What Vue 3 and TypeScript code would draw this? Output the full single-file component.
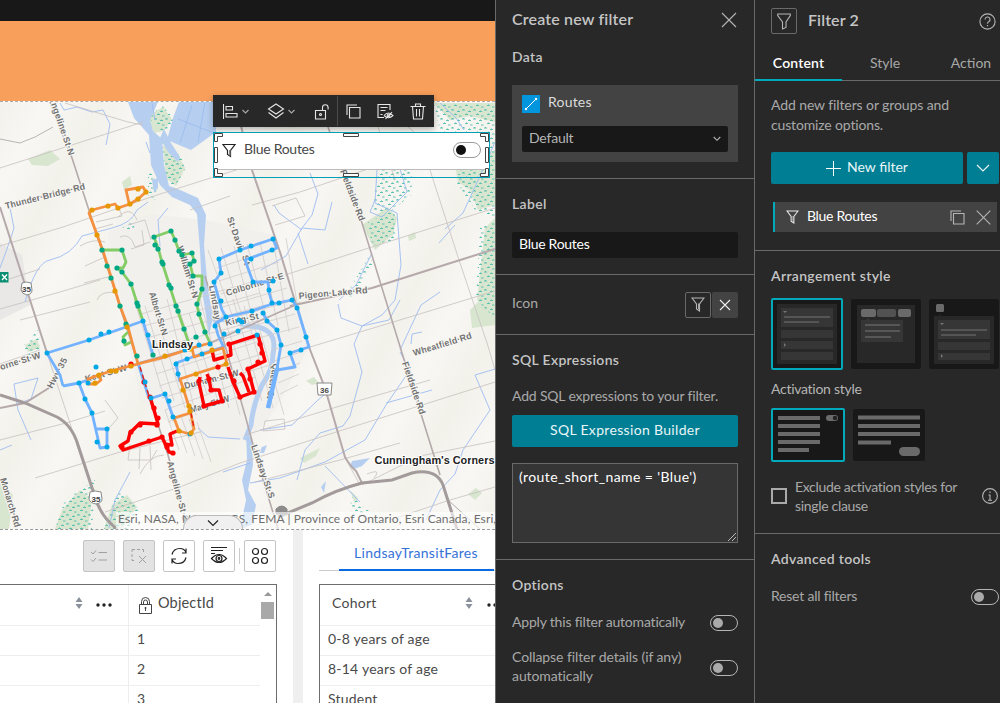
<script setup lang="ts">
interface MapLabel { t: string; x: number; y: number; r: number; w: number }
type Pt = [number, number]

const labels: MapLabel[] = [
  { t: 'ngeline·St·N', x: 51, y: 104, r: 71, w: 55 },
  { t: 'Thunder·Bridge·Rd', x: 6, y: 209, r: -14, w: 82 },
  { t: 'Albert·St·N', x: 149, y: 293, r: 73, w: 45 },
  { t: 'William·St·N', x: 177, y: 247, r: 73, w: 54 },
  { t: 'St·Davi', x: 227, y: 218, r: 71, w: 33 },
  { t: 'St', x: 242, y: 256, r: 75, w: 10 },
  { t: 'Lindsay', x: 209, y: 286, r: 80, w: 35 },
  { t: 'Colborne·St·E', x: 227, y: 296, r: -17, w: 60 },
  { t: 'Pigeon·Lake·Rd', x: 299, y: 299, r: -5, w: 69 },
  { t: 'Fieldside·Rd', x: 340, y: 171, r: 69, w: 54 },
  { t: 'Fieldside·Rd', x: 402, y: 363, r: 71, w: 55 },
  { t: 'Wheatfield·Rd', x: 414, y: 356, r: -17, w: 61 },
  { t: 'King·St', x: 226, y: 326, r: -12, w: 34 },
  { t: 'orne·St·W', x: 1, y: 370, r: -17, w: 42 },
  { t: 'Kent·St·W', x: 86, y: 382, r: -16, w: 43 },
  { t: 'Durham·St·W', x: 185, y: 389, r: -14, w: 56 },
  { t: 'Mary·St·W', x: 191, y: 413, r: -17, w: 41 },
  { t: 'Hwy·35', x: 52, y: 389, r: -62, w: 33 },
  { t: 'Angeline·St·S', x: 167, y: 462, r: 75, w: 62 },
  { t: 'Lindsay·St·S', x: 251, y: 446, r: 71, w: 56 },
  { t: 'Monarch·Rd', x: 0, y: 479, r: 73, w: 51 },
  { t: 'Queen·St', x: 273, y: 363, r: 100, w: 36 },
]

const minorRoads: string[] = [
  'M0 168 L78 143 L143 122', 'M0 246 L63 227 L160 194 L290 153', 'M0 309 L60 292 L100 280',
  'M65 103 L128 122 L143 125', 'M0 440 L66 423 L105 411', 'M35 478 L120 452 L200 432', 'M47 353 L83 463',
  'M40 350 L0 364', 'M105 512 L180 487 L240 463 L330 434 L438 400 L495 382',
  'M245 435 L340 406 L430 380', 'M285 275 L350 254 L422 231 L495 208', 'M252 205 L300 192 L365 170 L430 143',
  'M310 347 L390 323 L495 291', 'M362 485 L420 456 L495 441', 'M190 210 L230 196', 'M255 482 L340 460 L400 443',
  'M430 170 L459 260 L488 346 L495 370', 'M390 520 L450 500 L495 487', 'M380 103 L420 137',
  'M275 225 L305 216 L296 198 L272 206', 'M0 282 L40 269', 'M20 320 L90 302', 'M372 108 L395 180',
  'M105 400 L118 418 L109 428', 'M130 444 L128 460 L151 460 L157 450', 'M140 448 L139 469', 'M150 446 L151 470',
  'M140 474 Q150 455 164 455', 'M265 421 L284 419 L285 429 L263 431 Z', 'M367 474 Q382 468 374 478',
  'M360 485 L348 463', 'M118 217 Q131 205 137 220', 'M96 222 L122 216 L118 206', 'M95 229 L113 224',
  'M80 246 Q94 238 105 242', 'M85 266 L105 257', 'M84 283 L112 276', 'M97 300 Q101 290 117 293',
  'M120 237 Q130 232 135 247 L150 242', 'M128 225 L145 220 L151 240', 'M131 249 L144 245 L142 230',
]

// Town street grid, a family of parallel lines in each direction.
const blocks: string[] = []
for (let i = 0; i < 12; i++) {
  const x = 134 + i * 11
  blocks.push(`M${x} ${299 + (i % 3) * 7} L${x + 29} ${394 + (i % 4) * 7}`)
}
for (let i = 0; i < 10; i++) {
  const y = 314 + i * 12
  blocks.push(`M${141 + i * 3} ${y} L${255 + (i % 4) * 5} ${y - 33}`)
}
for (let i = 0; i < 7; i++) {
  blocks.push(`M${208 + i * 13} ${250 - i * 2} L${234 + i * 11} ${320 + (i % 3) * 6}`)
  blocks.push(`M${217 + i * 2} ${268 + i * 13} L${275 + i * 4} ${249 + i * 13}`)
}
for (let i = 0; i < 5; i++) {
  blocks.push(`M${272 + i * 2} ${350 + i * 11} l${30 - i * 3} -9`)
  blocks.push(`M${165 + i * 8} ${410 + i * 3} l14 40`)
}

const streams: string[] = [
  'M60 103 L64 110 L77 107 L92 112 L103 110 L110 124 L106 145', 'M0 268 Q9 244 14 228 L10 208',
  'M25 302 Q36 262 50 260 Q72 255 82 236 L112 228 Q132 223 137 210 L148 202', 'M168 208 L158 220 L160 246',
  'M152 103 L155 120', 'M150 153 L146 142', 'M14 405 L31 399 L38 378', 'M38 378 L14 384 L18 410 L31 440',
  'M0 450 L12 445', 'M310 173 L318 194 L312 215 L302 228 L325 230 L332 202', 'M302 228 L286 256 L261 270',
  'M298 233 L308 264', 'M377 169 L375 203 L397 213 L401 265 L395 300 L382 315 L362 326 L354 344 L362 372 L350 416 L343 426 L320 433 L305 450 L297 480',
  'M400 300 L389 320 L362 326', 'M375 200 L370 212 L382 217 L407 192 L400 169', 'M372 253 L356 285 L339 300',
  'M440 292 L421 305 L400 350', 'M400 352 L410 370 L386 405 L365 440 L325 462 L280 478 L250 483',
  'M386 403 L432 390', 'M495 369 L475 375 L490 410 L463 450 L455 474 L440 490 L426 520', 'M325 466 L360 502',
  'M338 304 L341 318 L362 326', 'M455 225 L439 243', 'M495 142 L485 165 L463 213 L445 229',
  'M440 103 L456 118 L464 130', 'M302 230 L279 213 L274 205', 'M260 430 L292 425 L318 400 L330 390',
  'M411 344 L412 334 L422 332', 'M130 472 L115 500 L109 528',
  'M198 428 L208 437 L240 439', 'M223 472 L250 463',
]

const greenRoutes: Pt[][] = [
  [[102, 250], [122, 250], [126, 262], [123, 268], [117, 268], [122, 272], [131, 284], [137, 303], [143, 321]],
  [[189, 344], [184, 329], [176, 306], [170, 287], [162, 262], [158, 248], [154, 237], [171, 231], [175, 240], [179, 251], [182, 255], [192, 253], [194, 261], [190, 264], [193, 276], [202, 276], [202, 289], [197, 305], [199, 314], [205, 332], [210, 343]],
  [[128, 332], [123, 337], [125, 345], [131, 342]],
]
const blueRoutes: Pt[][] = [
  [[63, 386], [60, 375], [47, 353], [89, 340], [143, 321], [153, 355]],
  [[63, 386], [79, 383], [88, 380]],
  [[79, 383], [85, 399], [92, 413], [100, 448], [107, 447], [107, 429], [96, 429]],
  [[138, 363], [148, 395], [152, 398], [165, 394], [173, 417]],
  [[180, 382], [178, 374], [176, 363], [201, 354], [223, 347]],
  [[272, 303], [269, 292], [268, 282], [253, 282], [245, 260], [272, 250], [277, 248], [273, 239], [240, 250], [219, 259], [221, 273], [214, 282], [222, 310], [226, 317]],
  [[224, 348], [218, 335], [215, 324], [226, 317], [252, 311], [272, 304], [292, 300], [297, 307], [306, 337], [309, 347], [290, 353], [295, 367], [277, 370]],
  [[263, 313], [267, 321], [277, 330], [281, 345], [277, 369], [268, 408]],
]
const redRoutes: Pt[][] = [
  [[150, 397], [154, 410], [158, 424], [140, 423], [130, 433], [128, 441], [120, 446], [123, 450], [147, 442], [162, 437], [169, 452], [173, 453]],
  [[164, 444], [172, 445], [170, 434], [177, 431]],
  [[200, 377], [199, 383], [204, 406], [222, 401], [219, 390], [211, 390], [209, 379], [207, 374]],
  [[228, 367], [233, 382], [240, 397], [254, 392], [248, 369], [265, 361], [258, 335], [230, 344], [231, 355], [214, 360], [212, 350]],
  [[249, 392], [243, 376], [240, 373]],
]
const orangeRoutes: Pt[][] = [
  [[138, 364], [128, 327], [120, 306], [103, 251], [89, 213], [92, 210], [115, 204], [118, 208], [130, 204], [138, 199], [146, 192], [143, 187], [126, 190], [129, 203]],
  [[210, 343], [192, 348], [165, 357], [138, 364], [111, 371], [99, 375], [88, 379], [88, 384], [96, 384], [101, 380], [99, 376]],
  [[192, 348], [194, 357], [223, 348], [227, 364], [204, 371], [180, 379], [184, 391], [190, 410], [194, 429], [190, 434], [179, 431], [174, 418], [190, 413]],
]
const path = (p: Pt[]): string => 'M' + p.map((q) => q.join(' ')).join(' L')

const greenStops: Pt[] = [[102, 250], [122, 250], [107, 266], [117, 268], [122, 272], [111, 278], [131, 284], [137, 303], [138, 306], [120, 306], [154, 237], [171, 231], [155, 245], [158, 249], [175, 240], [179, 251], [182, 255], [192, 253], [194, 261], [190, 264], [193, 276], [202, 289], [162, 262], [163, 264], [169, 285], [171, 288], [176, 306], [178, 311], [197, 304], [199, 314], [184, 329], [189, 344], [196, 337], [205, 332], [126, 324], [124, 341], [137, 356], [153, 355]]
const blueStops: Pt[] = [[47, 353], [89, 340], [101, 334], [109, 332], [143, 321], [148, 335], [96, 367], [79, 383], [85, 399], [92, 413], [97, 442], [107, 447], [107, 429], [145, 382], [151, 398], [165, 394], [169, 401], [173, 417], [176, 364], [187, 359], [202, 354], [178, 374], [185, 350], [199, 345], [210, 344], [224, 334], [238, 331], [242, 322], [239, 320], [219, 259], [240, 250], [221, 273], [214, 282], [221, 301], [273, 239], [251, 246], [272, 250], [251, 259], [253, 282], [273, 281], [269, 290], [272, 303], [279, 303], [292, 300], [297, 308], [252, 311], [263, 313], [267, 321], [277, 330], [281, 345], [306, 337], [301, 350], [290, 353], [257, 335], [226, 317], [215, 326], [190, 434], [88, 383]]
const orangeStops: Pt[] = [[92, 210], [108, 206], [118, 208], [130, 204], [138, 199], [146, 192], [138, 189], [97, 235], [115, 291], [127, 327], [131, 366], [116, 371], [111, 371], [99, 375], [95, 383], [165, 356], [212, 350], [226, 364], [196, 374], [183, 390], [189, 406], [190, 411], [179, 431], [191, 433], [190, 349]]
const redStops: Pt[] = [[131, 364], [144, 382], [150, 397], [154, 408], [158, 418], [157, 425], [140, 425], [131, 432], [122, 447], [149, 441], [162, 437], [167, 447], [173, 453], [234, 381], [240, 397], [218, 367], [229, 344], [254, 392], [250, 379], [248, 369], [258, 362], [262, 353], [260, 344], [211, 390], [209, 379], [199, 381], [204, 406], [222, 401]]

const ids: string[] = ['1', '2', '3']
const cohorts: string[] = ['0-8 years of age', '8-14 years of age', 'Student']
</script>

<template>
  <div class="app">
    <main class="canvas">
      <div class="top-bar"></div>
      <div class="banner"></div>

      <section class="map">
        <svg class="map-art" viewBox="0 102 495 427" width="495" height="427">
          <defs>
            <pattern id="marsh" width="11" height="9" patternUnits="userSpaceOnUse">
              <path d="M0 2h3M1.500 1v1M6 3.500h3M7.500 2.500v1M3 6.500h3M4.500 5.500v1M8 8h2.500" stroke="#52bdae" stroke-width=".9" />
            </pattern>
            <linearGradient id="relief" x1="0" y1="0" x2="40" y2="22" gradientUnits="userSpaceOnUse" spreadMethod="reflect">
              <stop offset="0" stop-color="#f8f7f4" /><stop offset="1" stop-color="#f2f1ea" />
            </linearGradient>
          </defs>
          <rect y="102" width="495" height="427" fill="url(#relief)" />
          <path d="M0 243 L22 255 L30 305 L0 320Z" fill="#e9e8e6" />
          <path d="M108 232 L150 214 L205 220 L275 235 L310 345 L275 410 L250 440 L190 440 L140 400Z" fill="#f1f0ed" />
          <g fill="#d8e5cf">
            <path d="M28 159 l22 -9 10 9 -12 7 -16 -1Z" /><path d="M122 182 l8 -6 2 9 -8 5Z" />
            <path d="M147 116 l16 -9 9 12 -8 12 -10 2Z" /><path d="M163 145 L178 155 L185 168 L176 186 L166 178Z" />
            <path d="M62 510 L80 490 L92 500 L88 529 L55 529Z" /><path d="M112 505 l15 -10 10 12 -15 22 -18 0Z" />
            <path d="M434 103 L495 103 V122 L470 116 L450 120Z" /><path d="M455 165 L495 150 V205 L478 210 L470 190 L458 182Z" />
            <path d="M362 225 L388 207 L397 218 L393 235 L375 250Z" /><path d="M485 228 l10 -10 V320 L477 300Z" />
            <path d="M470 310 L480 300 L495 305 V325 L472 328Z" /><path d="M408 236 l7 -4 1 6 -7 3Z" />
            <path d="M468 494 l8 -6 6 5 -7 7Z" /><path d="M306 381 l8 -4 5 6 -7 2Z" />
            <path d="M0 480 l13 15 -4 34 H0Z" /><path d="M25 345 l12 -6 3 9 -12 4Z" />
            <path d="M300 458 l20 -10 -4 8 -12 7Z" /><path d="M350 490 l8 8 -3 6Z" />
          </g>
          <g fill="url(#marsh)">
            <path d="M147 116 L163 106 L174 119 L164 133Z" /><path d="M161 140 L180 152 L185 170 L174 188 L164 175Z" />
            <path d="M55 529 L65 500 L95 480 L92 529Z" /><path d="M104 529 L118 490 L140 510 L128 529Z" />
            <path d="M434 103 L495 103 V218 L475 210 L455 180 L470 155 L440 132Z" />
            <path d="M378 170 L413 168 L411 195 L390 212 L372 212Z" />
            <path d="M368 222 L395 210 L395 240 L372 245Z" /><path d="M480 228 L495 220 V318 L476 300Z" />
            <path d="M24 345 L38 330 L40 355 L26 357Z" /><path d="M346 295 L368 258 L374 262 L352 297Z" />
            <path d="M122 228 L133 218 L135 232Z" /><path d="M148 170 L158 180 L155 200 L148 195Z" />
            <path d="M350 495 L370 512 L352 518Z" />
          </g>
          <g fill="#b6cff0">
            <path d="M128 102 H158 L150 120 L153 131 L162 139 L164 165 L169 186 L180 190 L198 198 L206 215 L204 245 L208 290 L213 318 L209 335 L202 290 L200 250 L197 214 L190 205 L172 197 L160 185 L151 165 L149 135 L134 118Z" />
            <path d="M164 129 L171 143 L180 157 L178 162 L168 152 L160 138Z" />
            <path d="M179 102 H216 V132 L191 150 L167 140 L173 118Z" />
            <path d="M152 180 l6 -2 0 10 -4 5Z" />
            <path d="M246 431 L252 440 L253 465 L248 490 L256 505 L252 525 L240 529 L246 500 L242 480 L247 460Z" />
            <path d="M352 461 l18 -3 -8 8 -8 3 -4 -3Z" /><path d="M262 447 l5 -2 -3 8 -5 0Z" /><path d="M321 487 l5 -6 -2 12Z" />
          </g>
          <path d="M213 320 Q230 318 247 326 Q279 326 273 354 Q273 370 262 385 Q253 405 251 425 L245 440" fill="none" stroke="#b6cff0" stroke-width="5" />
          <g fill="none" stroke="#9dbcf2" stroke-width=".9"><path v-for="(d, i) in streams" :key="i" :d="d" /></g>
          <path d="M178 119 l36 14 M192 105 l-12 38 M205 102 l-7 40" stroke="#94b8ed" stroke-width=".7" />
          <g fill="none" stroke="#c8c0c0" stroke-width=".8"><path v-for="(d, i) in minorRoads" :key="i" :d="d" /></g>
          <g fill="none" stroke="#d0c9c9" stroke-width=".75"><path v-for="(d, i) in blocks" :key="i" :d="d" /></g>
          <path d="M0 139 L20 143 L35 137 L53 127" fill="none" stroke="#999" stroke-width=".7" />
          <g fill="none" stroke="#b5a9ab" stroke-width="2">
            <path d="M50 102 L72 158 L97 235 L138 363 L168 455 L188 529" stroke-width="1.600" />
            <path d="M0 207 L30 300 L47 353" /><path d="M0 408 L25 403 L52 386" />
            <path d="M235 102 L252 170 L280 252 L309 347 L325 388 L345 457 Q350 466 356 471 L362 483" />
            <path d="M328 127 L362 223 L402 353 L440 475" stroke-width="1.600" />
            <path d="M290 306 L372 288 L438 267 L495 249" />
            <path d="M205 276 L245 415 L258 463 L278 529" stroke-width="1.600" />
            <path d="M138 363 L210 343 L300 303" stroke-width="1.600" />
            <path d="M448 500 L480 529" stroke-width="1" />
          </g>
          <g fill="none" stroke="#a39a9b" stroke-width="3">
            <path d="M0 395 L25 403 L57 417 Q72 425 78 445 L95 497 Q101 517 117 529" />
            <path d="M278 517 L312 503 Q335 490 362 483 L392 480 L412 473 Q436 468 443 485 L457 529" />
          </g>

          <g class="road-names">
            <text v-for="(l, i) in labels" :key="i" :transform="`translate(${l.x} ${l.y}) rotate(${l.r})`" :textLength="l.w">{{ l.t }}</text>
          </g>

          <g fill="none" stroke-linejoin="round">
            <path v-for="(r, i) in greenRoutes" :key="'g' + i" :d="path(r)" stroke="#84cc66" stroke-width="2.800" />
            <path v-for="(r, i) in blueRoutes" :key="'b' + i" :d="path(r)" stroke="#73b2ff" stroke-width="2.800" />
            <path v-for="(r, i) in redRoutes" :key="'r' + i" :d="path(r)" stroke="#ff0000" stroke-width="3.400" />
            <path v-for="(r, i) in orangeRoutes" :key="'o' + i" :d="path(r)" stroke="#f4903f" stroke-width="2.800" />
            <path d="M140 367 L149 396 M191 413 L194 428" stroke="#e2231a" stroke-width="1.500" stroke-dasharray="5 3" />
            <path d="M277 369 L268 408" stroke="#73b2ff" stroke-width="4.500" />
          </g>
          <g fill="#ff0000"><circle v-for="(p, i) in redStops" :key="i" :cx="p[0]" :cy="p[1]" r="2.600" /></g>
          <g fill="#00a7e6"><circle v-for="(p, i) in blueStops" :key="i" :cx="p[0]" :cy="p[1]" r="2.500" /></g>
          <g fill="#00a984"><circle v-for="(p, i) in greenStops" :key="i" :cx="p[0]" :cy="p[1]" r="2.600" /></g>
          <g fill="#e69800"><circle v-for="(p, i) in orangeStops" :key="i" :cx="p[0]" :cy="p[1]" r="2.600" /></g>

          <text class="place" x="152" y="347.500" textLength="41">Lindsay</text>
          <text class="place" x="374.500" y="463.500" textLength="120">Cunningham's Corners</text>
          <g class="shield">
            <path d="M22 283 q4 -2 9 0 l1 7 q0 4 -5 5 q-5 -1 -6 -5Z M90 492 q5 -2 11 0 l1 7 q0 4 -6 5 q-6 -1 -7 -5Z" />
            <text x="26.500" y="292">35</text><text x="96" y="501.500">35</text>
            <path d="M317 383 h15 l-1 12 h-13Z" /><text x="324.500" y="392.500">36</text>
            <path d="M276 509 q6 -6 11 0 v5 h-11Z" class="shield-cap" />
          </g>
          <rect y="272" width="8.500" height="10.500" fill="#0a8f72" />
          <path d="M2 274.500l5 5.500M7 274.500l-5 5.500" stroke="#fff" stroke-width="1.400" />
        </svg>
        <div class="attribution">Esri, NASA, NGA, USGS, FEMA | Province of Ontario, Esri Canada, Esri,</div>
        <div class="expander">
          <svg width="12" height="8" viewBox="0 0 12 8"><path d="M1 1.500l5 5 5-5" fill="none" stroke="#222" stroke-width="1.200" /></svg>
        </div>
      </section>

      <section class="tables">
        <div class="table-card first">
          <div class="tools">
            <span class="tool off"><svg viewBox="0 0 18 18"><path d="M1 5l2 2 3-3.500M8.500 5.500H17M1 12.500l2 2 3-3.500M8.500 13H17" /></svg></span>
            <span class="tool off"><svg viewBox="0 0 18 18"><path d="M2 5V2.500h3M7 2.500h3M12 2.500h1.500V5M2 7v3M2 12v1.500h2M9 9l7 7M16 9l-7 7" /></svg></span>
            <span class="tool"><svg viewBox="0 0 18 18"><path d="M2 7.500C3 3.500 6.500 1.500 10 1.500c3 0 5 1.500 6 4M16 1.500v4.500h-4M16 10.500c-1 4-4.500 6-8 6-3 0-5-1.500-6-4M2 16.500V12h4" /></svg></span>
            <span class="tool"><svg viewBox="0 0 18 18"><path d="M1 .5h16M1 3.500h12M1 6.500h4M1.500 11.500Q9 3.500 16.500 11.500Q9 19.500 1.500 11.500Z" /><circle cx="9" cy="11.500" r="3" /><circle cx="9" cy="11.500" r=".8" /></svg></span>
            <i class="tool-sep"></i>
            <span class="tool"><svg viewBox="0 0 18 18"><circle cx="4.500" cy="4.500" r="3" /><circle cx="13.500" cy="4.500" r="3" /><circle cx="4.500" cy="13.500" r="3" /><circle cx="13.500" cy="13.500" r="3" /></svg></span>
          </div>
          <div class="grid left-grid">
            <div class="grid-head">
              <svg class="sort" width="8" height="12" viewBox="0 0 8 12"><path d="M4 0l3.500 5h-7zM4 12l3.500-5h-7z" /></svg>
              <svg class="dots" width="16" height="4" viewBox="0 0 16 4"><circle cx="2" cy="2" r="1.700" /><circle cx="8" cy="2" r="1.700" /><circle cx="14" cy="2" r="1.700" /></svg>
              <svg class="lock" width="13" height="17" viewBox="0 0 13 17"><path d="M.5 7.500h12v9H.5zM2.500 7.500V4.500a4 4 0 0 1 8 0v3M4.500 7.500V5a2 2 0 0 1 4 0v2.500M6.500 10v4M5.500 11h2" /></svg>
              <span class="object-id">ObjectId</span>
            </div>
            <div v-for="id in ids" :key="id" class="grid-row"><span>{{ id }}</span></div>
            <div class="scroller"><i></i><b></b></div>
          </div>
        </div>
        <div class="table-gap"></div>
        <div class="table-card second">
          <div class="tab-strip"><span class="table-tab">LindsayTransitFares</span></div>
          <div class="grid right-grid">
            <div class="grid-head">
              <span class="cohort">Cohort</span>
              <svg class="sort" width="8" height="12" viewBox="0 0 8 12"><path d="M4 0l3.500 5h-7zM4 12l3.500-5h-7z" /></svg>
              <svg class="dots" width="16" height="4" viewBox="0 0 16 4"><circle cx="2" cy="2" r="1.700" /><circle cx="8" cy="2" r="1.700" /><circle cx="14" cy="2" r="1.700" /></svg>
            </div>
            <div v-for="c in cohorts" :key="c" class="grid-row"><span>{{ c }}</span></div>
          </div>
        </div>
      </section>

      <div class="widget-bar">
        <svg class="g-align" width="15" height="15" viewBox="0 0 15 15"><path d="M.5 0v15M3 2.500h6.500v3.500H3zM3 9.500h11V13H3z" /></svg>
        <svg class="chev c1" width="7" height="5" viewBox="0 0 7 5"><path d="M.5 1l3 3 3-3" /></svg>
        <svg class="g-layers" width="18" height="17" viewBox="0 0 18 17"><path d="M9 1l7.500 5L9 11 1.500 6zM1.500 9.500L9 15l7.500-5.500" /></svg>
        <svg class="chev c2" width="7" height="5" viewBox="0 0 7 5"><path d="M.5 1l3 3 3-3" /></svg>
        <svg class="g-lock" width="15" height="17" viewBox="0 0 15 17"><path d="M1.500 7.500h10v8.500h-10zM8.500 7.500V4.500a2.800 2.800 0 0 1 5.600 0v2" /><circle cx="6.500" cy="11.500" r="1" /></svg>
        <i class="bar-sep"></i>
        <svg class="g-copy" width="15" height="15" viewBox="0 0 15 15"><path d="M3.500 3.500h10.500V14H3.500zM1 11V1h10" /></svg>
        <svg class="g-pend" width="17" height="17" viewBox="0 0 17 17"><path d="M13 7V1.500H1V14.500h6M3.500 4.500h7M3.500 7.500h5M3.500 11.500h2M7 12.500Q11.500 7.500 16 12.500Q11.500 17 7 12.500M8.500 16l6.500-7" /><circle cx="11.500" cy="12.300" r="1.300" /></svg>
        <svg class="g-trash" width="16" height="17" viewBox="0 0 16 17"><path d="M.5 3.500h15M5.500 3V1h5v2M2.500 3.500L3.500 16h9l1-12.500M6.500 6v7.500M9.500 6v7.500" /></svg>
      </div>

      <div class="widget">
        <div class="widget-row">
          <svg width="15" height="15" viewBox="0 0 15 15"><path d="M1 1.500h12L8.500 7.500V13.500L5.500 11.500V7.500z" fill="none" stroke="#222" stroke-width="1.200" /><path d="M7 7h1.500v6L7 12z" fill="#888" /></svg>
          <span>Blue Routes</span>
          <div class="switch light"><i></i></div>
        </div>
        <svg class="handles" width="277" height="46" viewBox="0 0 277 46">
          <g fill="#fff" stroke="#444" stroke-width="1">
            <path d="M1.500 1.500h8v3h-5v5h-3zM275.500 1.500h-8v3h5v5h3zM1.500 44.500h8v-3h-5v-5h-3zM275.500 44.500h-8v-3h5v-5h3z" />
            <path d="M130.500 1.500h15v3h-15zM130.500 41.500h15v3h-15zM1.500 15.500h3v15h-3zM272.500 15.500h3v15h-3z" />
          </g>
        </svg>
      </div>
    </main>

    <aside class="panel filter-panel">
      <section class="block data-block">
        <header class="row"><h2 class="t-create">Create new filter</h2>
          <svg class="close" width="16" height="16" viewBox="0 0 16 16"><path d="M1 1l14 14M15 1L1 15" class="ln" /></svg></header>
        <h3 class="t-data">Data</h3>
        <div class="source">
          <div class="source-name"><span class="source-icon"><svg width="18" height="18" viewBox="0 0 18 18"><path d="M4 14L14 4" stroke="#fff" /><circle cx="4" cy="14" r="1.200" fill="#fff" /><circle cx="14" cy="4" r="1.200" fill="#fff" /></svg></span><span class="t-routes">Routes</span></div>
          <div class="select"><span>Default</span><svg width="8" height="6" viewBox="0 0 8 6"><path d="M.7 1l3.300 3.300L7.300 1" class="ln" /></svg></div>
        </div>
      </section>
      <section class="block label-block"><h3 class="t-label">Label</h3><div class="input">Blue Routes</div></section>
      <section class="block icon-block"><span class="t-icon">Icon</span>
        <div class="icon-pair">
          <span class="icon-box"><svg width="14" height="15" viewBox="0 0 14 15"><path d="M1 1h12L8.500 7v7l-3-2V7z" class="ln" /><path d="M7 6.500h1.500V13L7 12z" fill="#aaa" /></svg></span>
          <span class="icon-clear"><svg width="12" height="12" viewBox="0 0 12 12"><path d="M1 1l10 10M11 1L1 11" class="ln bright" /></svg></span>
        </div>
      </section>
      <section class="block sql-block">
        <h3 class="t-sql">SQL Expressions</h3>
        <p class="t-add">Add SQL expressions to your filter.</p>
        <div class="primary builder">SQL Expression Builder</div>
        <div class="sql-text">(route_short_name = 'Blue')<svg width="8" height="8" viewBox="0 0 8 8"><path d="M0 8L8 0M4 8l4-4" stroke="#ddd" stroke-width=".8" /></svg></div>
      </section>
      <section class="block options-block">
        <h3 class="t-options">Options</h3>
        <div class="row opt"><span class="t-apply">Apply this filter automatically</span><div class="switch"><i></i></div></div>
        <div class="row opt two"><span class="t-collapse">Collapse filter details (if any)<br />automatically</span><div class="switch"><i></i></div></div>
      </section>
    </aside>

    <aside class="panel config-panel">
      <header class="config-head">
        <span class="icon-box"><svg width="14" height="17" viewBox="0 0 14 17"><path d="M.7 1h12.600v1.500L9 9v5.500L5.500 16V9L.7 2.500z" class="ln" /></svg></span>
        <h2 class="t-filter2">Filter 2</h2>
        <svg class="help" width="17" height="17" viewBox="0 0 17 17"><circle cx="8.500" cy="8.500" r="7.600" class="ln" /><path d="M6 6.500a2.500 2.500 0 1 1 3.700 2.200Q8.500 9.300 8.500 10.700M8.500 12v1.300" class="ln" /></svg>
      </header>
      <nav class="tabs"><span class="tab on">Content</span><span class="tab">Style</span><span class="tab action">Action</span></nav>
      <section class="block intro">
        <p class="t-intro">Add new filters or groups and<br /><em>customize options.</em></p>
        <div class="new-row">
          <div class="primary new"><svg width="15" height="15" viewBox="0 0 15 15"><path d="M7.500 0v15M0 7.500h15" stroke="#fff" /></svg><span>New filter</span></div>
          <div class="primary more"><svg width="14" height="8" viewBox="0 0 14 8"><path d="M1 1l6 6 6-6" stroke="#e8f5f7" fill="none" stroke-width="1.200" /></svg></div>
        </div>
        <div class="filter-item">
          <svg width="13" height="14" viewBox="0 0 14 15"><path d="M1 1h12L8.500 7v7l-3-2V7z" class="ln bright" /><path d="M7 6.500h1.500V13L7 12z" fill="#bbb" /></svg>
          <span>Blue Routes</span>
          <svg class="dup" width="15" height="15" viewBox="0 0 15 15"><path d="M3.500 3.500h10.500V14H3.500zM1 11V1h10" class="ln" /></svg>
          <svg width="15" height="15" viewBox="0 0 15 15"><path d="M.7 .7l13.600 13.600M14.300 .7L.7 14.300" class="ln" /></svg>
        </div>
      </section>
      <section class="block styles">
        <h3 class="t-arr">Arrangement style</h3>
        <div class="cards">
          <div class="card selected"><svg width="68" height="68" viewBox="0 0 68 68"><path d="M4 4h60v60H4z" fill="#282828" /><path d="M8 8h52v19H8zM8 30h52v8H8zM8 41h52v8H8zM8 52h52v8H8z" fill="#363636" /><path d="M11 17h46M11 22h35" stroke="#555" stroke-width="2" /><path d="M10 11h4l-2 2zM11 43v4l2-2z" fill="#777" /></svg></div>
          <div class="card"><svg width="70" height="70" viewBox="0 0 70 70"><path d="M6 6h58v58H6z" fill="#282828" /><path d="M10 21h5l2-2 2 2h33v22H10z" fill="#363636" /><rect x="10" y="10" width="15" height="8" rx="2" fill="#6a6a6a" /><rect x="26" y="10" width="19" height="8" rx="2" fill="#525252" /><rect x="47" y="10" width="13" height="8" rx="2" fill="#6a6a6a" /><path d="M14 26h35M14 32h35M14 38h26" stroke="#575757" stroke-width="2" /></svg></div>
          <div class="card"><svg width="70" height="70" viewBox="0 0 70 70"><rect x="7" y="5" width="8" height="8" rx="1.500" fill="#6a6a6a" /><path d="M5 17h5l1-2 1 2h53v48H5z" fill="#282828" /><path d="M9 21h52v19H9zM9 43h52v8H9zM9 54h52v7H9z" fill="#363636" /><path d="M12 31h46M12 36h35" stroke="#555" stroke-width="2" /><path d="M11 24h4l-2 2zM12 55v4l2-2z" fill="#777" /></svg></div>
        </div>
        <h4 class="t-act">Activation style</h4>
        <div class="cards low">
          <div class="card selected"><svg width="70" height="50" viewBox="0 0 70 50"><path d="M5 8h42M5 16h42M5 24h42M5 32h42M5 40h31" stroke="#6a6a6a" stroke-width="4" /><rect x="53" y="5" width="12" height="6" rx="3" fill="#6a6a6a" /><circle cx="62" cy="8" r="2.200" fill="#222" /></svg></div>
          <div class="card"><svg width="72" height="52" viewBox="0 0 72 52"><path d="M5 8.500h62M5 17h62M5 25h62M5 33.500h33" stroke="#6a6a6a" stroke-width="4" /><rect x="46" y="38" width="21" height="9" rx="4.500" fill="#6a6a6a" /></svg></div>
        </div>
        <div class="exclude">
          <i class="check"></i><span class="t-excl">Exclude activation styles for<br />single clause</span>
          <svg width="16" height="16" viewBox="0 0 16 16"><circle cx="8" cy="8" r="7.400" class="ln" /><path d="M8 3.500v1.600M6.500 7H8v5M6 12.200h4" class="ln" /></svg>
        </div>
      </section>
      <section class="advanced">
        <h3 class="t-adv">Advanced tools</h3>
        <div class="row reset"><span class="t-reset">Reset all filters</span><div class="switch"><i></i></div></div>
      </section>
    </aside>
  </div>
</template>

<style>
body { margin: 0; overflow: hidden; }
</style>

<style scoped>
* { box-sizing: border-box; }
h2, h3, h4, p { margin: 0; }
svg { display: block; flex: none; }
span, h2, h3, h4, p { white-space: nowrap; }
.app { display: flex; width: 1000px; height: 703px; overflow: hidden; background: #282828; font: 14px/19px Lato, "Open Sans", sans-serif; }
.canvas { position: relative; width: 495px; height: 703px; display: flex; flex-direction: column; background: #fff; overflow: hidden; }
.top-bar { flex: none; height: 21px; background: #181818; }
.banner { flex: none; height: 80px; background: #f89f5b; }
.map { position: relative; flex: none; height: 429px; border-top: 1px dashed #aaa; border-bottom: 1px dashed #999; overflow: hidden; }
.road-names text { font: bold 9px "Liberation Sans", Arial, sans-serif; fill: #727272; stroke: #f7f6f2; stroke-width: 2px; paint-order: stroke; }
.place { font: bold 11px "Liberation Sans", Arial, sans-serif; fill: #222; stroke: #fff; stroke-width: 2px; paint-order: stroke; }
.shield path { fill: #fff; stroke: #888; }
.shield .shield-cap { fill: #8c8c8c; }
.shield text { font: bold 8px "Liberation Sans", Arial, sans-serif; fill: #444; text-anchor: middle; }
.attribution { position: absolute; left: 116px; right: 0; bottom: 0; height: 17px; padding-left: 2px; overflow: hidden; white-space: nowrap; background: rgba(255,255,255,.62); color: #6e6e6e; font-size: 12px; line-height: 14px; letter-spacing: .11px; }
.expander { position: absolute; left: 183px; bottom: 0; width: 60px; height: 14px; display: flex; align-items: center; justify-content: center; border: 1px solid #bbb; border-bottom: 0; border-radius: 22px 22px 0 0; background: #f0f0f0; }

.tables { flex: 1; min-height: 0; overflow: hidden; display: flex; color: #4a4a4a; }
.first { width: 293px; }
.table-gap { width: 10px; background: #efefef; }
.second { width: 192px; padding-left: 16px; }
.tools { display: flex; align-items: center; height: 54px; padding: 0 0 3px 83px; gap: 8px; }
.tool { width: 32px; height: 32px; display: grid; place-items: center; border: 1px solid #c4c4c4; border-radius: 2px; }
.tool svg { width: 18px; height: 18px; fill: none; stroke: #222; stroke-width: 1.200; }
.off { background: #e3e3e3; }
.off svg { stroke: #a0a0a0; stroke-width: 1; }
.tool-sep { width: 1px; height: 16px; margin: 0 -4px; background: #ccc; }
.grid { position: relative; height: 160px; border: 1px solid #6d6d6d; border-bottom: 0; }
.left-grid { width: 277px; border-left: 0; }
.right-grid { width: 200px; }
.grid-head { display: flex; align-items: center; height: 41px; border-bottom: 1px solid #eee; padding-bottom: 4px; }
.sort { fill: #8a919c; }
.left-grid .sort { margin-left: 75px; }
.dots { margin: 3px 0 0 13px; fill: #222; }
.lock { margin: 4px 0 0 27px; fill: none; stroke: #444; }
.object-id { margin-left: 6px; padding-bottom: 1px; font-size: 14.500px; letter-spacing: .15px; }
.left-grid .grid-row { height: 30px; width: 260px; padding-left: 137px; border-bottom: 1px solid #eee; line-height: 25px; }
.left-grid::before { content: ""; position: absolute; left: 128px; top: 0; width: 1px; height: 160px; background: #eee; }
.left-grid .grid-head { width: 260px; }
.scroller { position: absolute; right: 0; top: 0; width: 17px; height: 140px; display: flex; flex-direction: column; align-items: center; }
.scroller i { margin-top: 7px; border: 4px solid transparent; border-top: 0; border-bottom: 4px solid #999; }
.scroller b { margin-top: 6px; width: 13px; height: 17px; background: #a9a9a9; }
.cohort { width: 145px; flex: none; padding: 0 0 2px 12px; letter-spacing: .25px; }
.right-grid .grid-row { height: 30px; padding-left: 8px; border-bottom: 1px solid #eee; line-height: 25px; letter-spacing: .22px; }
.right-grid .dots { margin-left: 14px; }
.tab-strip { height: 41px; border-bottom: 1px solid #ccc; margin-bottom: 13px; padding-left: 20px; }
.table-tab { display: block; width: 155px; height: 41px; padding: 13px 0 0 15px; border-bottom: 2px solid #0b6ae0; color: #3572d8; letter-spacing: .3px; }

.widget-bar { position: absolute; left: 213px; top: 95px; width: 221px; height: 32px; display: flex; align-items: center; padding-left: 10px; background: #282828; box-shadow: 0 2px 6px rgba(0,0,0,.3); }
.widget-bar svg { fill: none; stroke: #e6e6e6; stroke-width: 1.100; }
.widget-bar .chev { stroke: #aaa; }
.c1 { margin-left: 4px; } .g-layers { margin-left: 18px; } .c2 { margin-left: 3px; } .g-lock { margin-left: 19px; }
.bar-sep { width: 1px; height: 30px; margin-left: 8px; background: #4a4a4a; } .g-copy { margin-left: 8px; } .g-pend { margin-left: 16px; } .g-trash { margin-left: 16px; }
.widget { position: absolute; left: 213px; top: 132px; width: 277px; height: 46px; border: 1px solid #009fb5; }
.widget-row { display: flex; align-items: center; height: 37px; padding: 0 8px 2px; background: #fff; border-bottom: 1px solid #bbb; color: #484848; }
.widget-row span { margin-left: 7px; padding-bottom: 3px; letter-spacing: -.27px; }
.handles { position: absolute; left: -1px; top: -1px; }
.switch { margin-left: auto; width: 28px; height: 16px; flex: none; border: 1px solid #b5b5b5; border-radius: 8px; display: flex; align-items: center; padding-left: 2px; }
.switch i { width: 10px; height: 10px; border-radius: 50%; background: #aaa; }
.light { border-color: #999; } .light i { background: #111; }

.panel { color: #a8a8a8; background: #282828; border-left: 1px solid #6a6a6a; }
.filter-panel { width: 259px; }
.config-panel { width: 246px; overflow: hidden; }
.ln { fill: none; stroke: #b5b5b5; stroke-width: 1.100; }
.bright { stroke: #eee; }
.block { padding: 0 16px; border-bottom: 1px solid #6a6a6a; }
.row { display: flex; align-items: center; justify-content: space-between; }
h2, h3 { color: #c5c5c5; font-weight: 600; }
h2 { font-size: 16px; padding-bottom: 3px; } h3 { font-size: 14px; letter-spacing: .33px; } h4 { font-size: 14px; font-weight: 400; }
.data-block { height: 179px; padding-top: 10px; }
.data-block .row { height: 20px; }
.close { margin-right: 1px; }
.t-create { letter-spacing: .17px; }
.t-data { margin-top: 17px; }
.source { margin-top: 19px; height: 77px; padding: 8px 10px 10px; background: #434343; }
.source-name { display: flex; height: 23px; }
.source-icon { margin-top: 2px; width: 18px; height: 18px; background: #0095dd; }
.t-routes { margin: -1px 0 0 8px; color: #ddd; letter-spacing: .2px; }
.select { margin-top: 10px; height: 26px; padding: 0 7px; display: flex; align-items: center; justify-content: space-between; border-radius: 2px; background: #181818; color: #b5b5b5; letter-spacing: -.2px; }
.select span { padding-bottom: 3px; }
.label-block { height: 96px; padding-top: 15px; }
.input { margin-top: 19px; height: 26px; padding-left: 7px; line-height: 23px; border-radius: 2px; background: #181818; color: #fff; letter-spacing: -.28px; }
.icon-block { height: 60px; display: flex; align-items: center; justify-content: space-between; }
.t-icon { padding-bottom: 4px; }
.icon-pair { display: flex; gap: 1px; }
.icon-box, .icon-clear { width: 26px; height: 26px; display: grid; place-items: center; border: 1px solid #6a6a6a; border-radius: 2px; }
.icon-clear { border: 0; background: #434343; }
.sql-block { height: 225px; padding-top: 15px; }
.t-add { margin-top: 17px; letter-spacing: -.17px; }
.primary { display: flex; align-items: center; justify-content: center; background: #007f94; color: #e9f5f7; border-radius: 2px; height: 32px; }
.builder { margin-top: 10px; padding-bottom: 3px; letter-spacing: .33px; }
.sql-text { position: relative; margin-top: 16px; height: 80px; padding: 3px 6px; border: 1px solid #6a6a6a; background: #353535; color: #fff; letter-spacing: .4px; }
.sql-text svg { position: absolute; right: 1px; bottom: 1px; }
.options-block { border: 0; padding-top: 15px; }
.opt { margin-top: 18px; } .opt.two { margin-top: 16px; line-height: 19px; }
.opt .switch { margin-top: 2px; }
.opt.two .switch { margin-top: 3px; }
.t-apply { letter-spacing: -.19px; } .t-collapse { letter-spacing: -.08px; }

.config-head { display: flex; align-items: center; height: 42px; padding-left: 16px; }
.t-filter2 { margin-left: 11px; letter-spacing: .1px; }
.help { margin-left: 120px; }
.tabs { display: flex; height: 39px; border-bottom: 1px solid #6a6a6a; }
.tab { width: 86px; height: 39px; padding-top: 11px; text-align: center; flex: none; }
.on { width: 87px; color: #fff; font-weight: 600; border-bottom: 2px solid #00aabb; letter-spacing: .15px; }
.intro { height: 170px; padding-top: 14px; }
.t-intro { line-height: 20px; letter-spacing: -.1px; } .t-intro em { font-style: normal; letter-spacing: -.15px; }
.new-row { display: flex; gap: 4px; margin-top: 17px; }
.new { width: 192px; flex: none; gap: 6px; } .more { width: 32px; flex: none; }
.new span { padding-bottom: 3px; }
.filter-item { display: flex; align-items: center; margin: 18px 0 0 2px; width: 224px; height: 30px; padding-left: 11px; border-left: 2px solid #00aabb; background: #434343; color: #fff; }
.filter-item span { margin-left: 8px; padding-bottom: 3px; letter-spacing: -.3px; } .dup { margin: 0 11px 0 auto; } .filter-item svg:last-child { margin-right: 6px; }
.styles { height: 283px; padding-top: 15px; }
.cards { display: flex; align-items: center; gap: 8px; margin-top: 13px; }
.card { flex: none; background: #181818; border-radius: 2px; }
.selected { border: 2px solid #00aabb; }
.t-act { margin-top: 9px; color: #b5b5b5; letter-spacing: -.28px; }
.low { margin-top: 10px; }
.exclude { display: flex; align-items: center; margin-top: 15px; }
.check { width: 16px; height: 16px; flex: none; border: 2px solid #aaa; }
.t-excl { margin-left: 8px; width: 187px; flex: none; letter-spacing: -.32px; }
.advanced { padding: 15px 2px 0 16px; }
.reset { margin-top: 18px; width: 228px; }
.t-reset { padding-bottom: 2px; letter-spacing: -.22px; }
</style>
